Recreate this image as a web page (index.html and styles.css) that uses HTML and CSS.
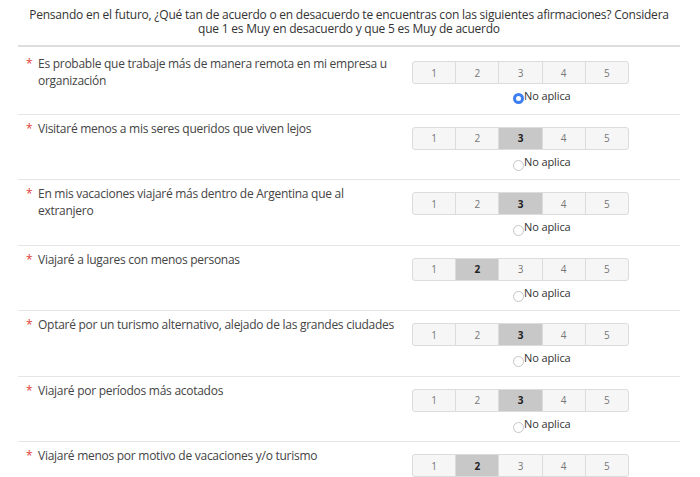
FILE: index.html
```html
<!DOCTYPE html>
<html lang="es">
<head>
    <meta charset="UTF-8">
    <title>Encuesta</title>
    <link rel="stylesheet" href="styles.css">
</head>
<body>
<div class="survey">
    <div class="survey-head">
        Pensando en el futuro, ¿Qué tan de acuerdo o en desacuerdo te encuentras con las siguientes afirmaciones? Considera que 1 es Muy en desacuerdo y que 5 es Muy de acuerdo
    </div>

    <div class="row first">
        <div class="question"><span class="req">*</span><span>Es probable que trabaje más de manera remota en mi empresa u organización</span></div>
        <div class="answer">
            <div class="scale">
                <div class="opt">1</div><div class="opt">2</div><div class="opt">3</div><div class="opt">4</div><div class="opt">5</div>
            </div>
            <div class="na"><span class="radio checked"></span>No aplica</div>
        </div>
    </div>

    <div class="row">
        <div class="question"><span class="req">*</span><span>Visitaré menos a mis seres queridos que viven lejos</span></div>
        <div class="answer">
            <div class="scale">
                <div class="opt">1</div><div class="opt">2</div><div class="opt on">3</div><div class="opt">4</div><div class="opt">5</div>
            </div>
            <div class="na"><span class="radio"></span>No aplica</div>
        </div>
    </div>

    <div class="row">
        <div class="question"><span class="req">*</span><span>En mis vacaciones viajaré más dentro de Argentina que al extranjero</span></div>
        <div class="answer">
            <div class="scale">
                <div class="opt">1</div><div class="opt">2</div><div class="opt on">3</div><div class="opt">4</div><div class="opt">5</div>
            </div>
            <div class="na"><span class="radio"></span>No aplica</div>
        </div>
    </div>

    <div class="row">
        <div class="question"><span class="req">*</span><span>Viajaré a lugares con menos personas</span></div>
        <div class="answer">
            <div class="scale">
                <div class="opt">1</div><div class="opt on">2</div><div class="opt">3</div><div class="opt">4</div><div class="opt">5</div>
            </div>
            <div class="na"><span class="radio"></span>No aplica</div>
        </div>
    </div>

    <div class="row">
        <div class="question"><span class="req">*</span><span>Optaré por un turismo alternativo, alejado de las grandes ciudades</span></div>
        <div class="answer">
            <div class="scale">
                <div class="opt">1</div><div class="opt">2</div><div class="opt on">3</div><div class="opt">4</div><div class="opt">5</div>
            </div>
            <div class="na"><span class="radio"></span>No aplica</div>
        </div>
    </div>

    <div class="row">
        <div class="question"><span class="req">*</span><span>Viajaré por períodos más acotados</span></div>
        <div class="answer">
            <div class="scale">
                <div class="opt">1</div><div class="opt">2</div><div class="opt on">3</div><div class="opt">4</div><div class="opt">5</div>
            </div>
            <div class="na"><span class="radio"></span>No aplica</div>
        </div>
    </div>

    <div class="row">
        <div class="question"><span class="req">*</span><span>Viajaré menos por motivo de vacaciones y/o turismo</span></div>
        <div class="answer">
            <div class="scale">
                <div class="opt">1</div><div class="opt on">2</div><div class="opt">3</div><div class="opt">4</div><div class="opt">5</div>
            </div>
            <div class="na"><span class="radio"></span>No aplica</div>
        </div>
    </div>
</div>
</body>
</html>
```

FILE: styles.css
```css
* {
    box-sizing: border-box;
}

body {
    margin: 0;
    background-color: #fff;
    font-family: "Open Sans", "Liberation Sans", sans-serif;
    color: #333;
    overflow: hidden;
}

.survey {
    margin: 0 20px 0 18px;
}

.survey-head {
    padding: 8px 4px 9px 4px;
    text-align: center;
    font-size: 12px;
    line-height: 14px;
    letter-spacing: -0.22px;
    color: #333;
    border-bottom: 2px solid #ddd;
}

.row {
    display: flex;
    height: 65.6px;
    padding-top: 6px;
    border-bottom: 1px solid #e6e6e6;
}

.row.first {
    padding-top: 9px;
    height: 67.5px;
}

.question {
    display: flex;
    width: 394px;
    padding-left: 8px;
    font-size: 12px;
    line-height: 16.5px;
    letter-spacing: -0.27px;
    color: #444;
}

.question .req {
    color: #e0443a;
    width: 12px;
    flex: none;
}

.question span:last-child {
    padding-right: 12px;
}

.answer {
    display: flex;
    flex-direction: column;
    width: 217px;
    padding-top: 6px;
}

.row.first .answer {
    padding-top: 5px;
}

.scale {
    display: flex;
    width: 217px;
    height: 23px;
    border: 1px solid #dcdcdc;
    border-radius: 3px;
    background-color: #f6f6f6;
    overflow: hidden;
}

.opt {
    flex: 1;
    display: flex;
    justify-content: center;
    align-items: center;
    font-size: 10px;
    color: #777;
    border-left: 1px solid #dcdcdc;
}

.opt:first-child {
    border-left: none;
}

.opt.on {
    background-color: #c8c8c8;
    color: #222;
    font-weight: 700;
}

.na {
    display: flex;
    align-items: flex-start;
    margin: 5px 0 0 101px;
    font-size: 11px;
    line-height: 14px;
    letter-spacing: -0.1px;
    color: #333;
}

.radio {
    flex: none;
    width: 11px;
    height: 11px;
    border-radius: 50%;
    border: 1px solid #c6c6c6;
    background-color: #fff;
    margin-top: 5px;
}

.radio.checked {
    border: 3px solid #3d7ff2;
    margin-top: 4px;
}
```
